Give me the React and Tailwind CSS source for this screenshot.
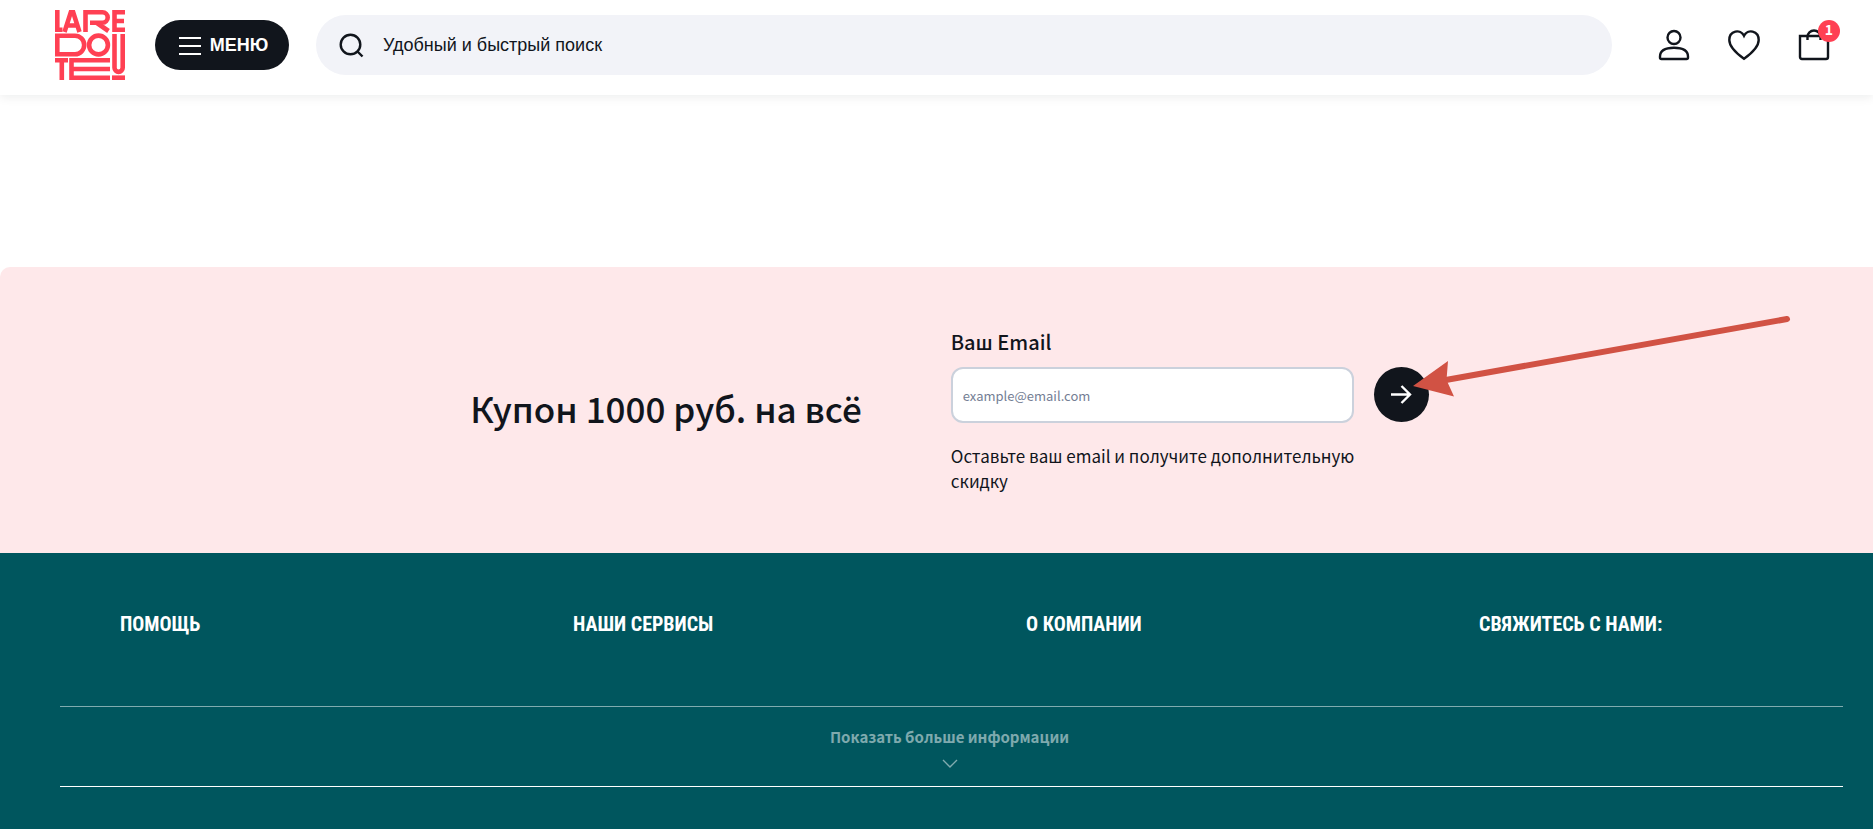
const FOOTER_COLUMNS = ['ПОМОЩЬ', 'НАШИ СЕРВИСЫ', 'О КОМПАНИИ', 'СВЯЖИТЕСЬ С НАМИ:'];

function Logo() {
  return (
    <svg className="w-[70px] h-[70px]" viewBox="0 0 70 70" fill="none" stroke="#ff4053" strokeWidth="4.600">
      {/* first row */}
      <path d="M2.300 0V19.700H7.500" />
      <path d="M9.500 22L15.800 2.300H18.200L24.500 22M12 15.500H22" />
      <path d="M30.500 22V2.300H47.500A5.200 5.200 0 0 1 47.500 12.700H35M42 13L53.500 21" />
      <path d="M70 2.300H59.500V19.700H70M59 11H69" />
      {/* second row */}
      <path d="M2.300 25.800H20A9.200 9.200 0 0 1 20 44.200H2.300Z" />
      <circle cx="43.500" cy="35" r="9.400" />
      <path d="M59.500 24V57.800A4.100 4.100 0 0 0 67.700 57.800V24" />
      {/* third row */}
      <path d="M0 50.300H13M6.800 50V70" />
      <path d="M55 50.300H16.500V67.700H55M17 59H55" />
      <path d="M57 67.700H70" />
    </svg>
  );
}

function Header() {
  return (
    <header className="flex items-center h-[95px] pl-[55px] pr-[43px] pb-[5px] bg-white shadow-[0_2px_10px_rgba(18,22,29,0.08)]">
      <a href="#" aria-label="La Redoute">
        <Logo />
      </a>
      <button className="flex items-center justify-center gap-2 ml-[30px] pl-0.5 w-[134px] h-[50px] rounded-full bg-[#11151c] text-white text-lg font-bold">
        <svg className="w-6 h-6" viewBox="0 0 24 24" stroke="currentColor" strokeWidth="2">
          <path d="M1 5H23M1 13H23M1 21H23" />
        </svg>
        МЕНЮ
      </button>
      <label className="flex flex-1 items-center ml-[27px] h-[60px] rounded-full bg-[#f2f3f8] pl-[22px]">
        <svg className="w-[26px] h-[26px]" viewBox="0 0 26 26" fill="none" stroke="#11151c" strokeWidth="2.400">
          <circle cx="12.500" cy="12.500" r="9.800" />
          <path d="M19 19L24.500 24.500" />
        </svg>
        <input
          type="text"
          aria-label="Поиск"
          placeholder="Удобный и быстрый поиск"
          className="flex-1 ml-[19px] h-full bg-transparent text-lg outline-none placeholder:text-[#11151c]"
        />
      </label>
      <nav className="flex items-center gap-[38px] ml-[46px]">
        <a href="#" aria-label="Профиль">
          <svg className="w-8 h-8" viewBox="0 0 32 32" fill="none" stroke="#11151c" strokeWidth="2.400">
            <circle cx="16" cy="8.500" r="6.500" />
            <path d="M2 27.500C2 21 8 18.700 16 18.700S30 21 30 27.500V28.500Q30 30 28.500 30H3.500Q2 30 2 28.500Z" />
          </svg>
        </a>
        <a href="#" aria-label="Избранное">
          <svg className="w-8 h-8" viewBox="0 0 32 32" fill="none" stroke="#11151c" strokeWidth="2.400">
            <path d="M16 29.800C10 25.500 1.300 18.500 1.300 11C1.300 1.500 12.500 -0.500 16 6.800C19.500 -0.500 30.700 1.500 30.700 11C30.700 18.500 22 25.500 16 29.800Z" />
          </svg>
        </a>
        <a href="#" aria-label="Корзина" className="relative">
          <svg className="w-8 h-8" viewBox="0 0 32 32" fill="none" stroke="#11151c" strokeWidth="2.400">
            <path d="M2 7H30V28Q30 30 28 30H4Q2 30 2 28Z" />
            <path d="M9.500 11V8A6.500 6.500 0 0 1 22.500 8V11" />
          </svg>
          <span className="absolute -top-[9px] -right-[10px] w-[22px] h-[22px] rounded-full bg-[#ff4053] text-white text-sm leading-[19px] font-bold text-center font-['Noto_Sans_CJK_SC',sans-serif]">
            1
          </span>
        </a>
      </nav>
    </header>
  );
}

function Subscribe() {
  return (
    <section className="flex justify-center items-start gap-[89px] pl-[60px] pr-[34px] py-[60px] rounded-tl-[10px] bg-[#fee8ea] font-['Noto_Sans_CJK_SC',sans-serif]">
      <h2 className="pt-[53px] text-[35px] leading-[56px] font-medium">Купон 1000 руб. на всё</h2>
      <form>
        <label htmlFor="email" className="block text-xl leading-[30px] font-medium">
          Ваш Email
        </label>
        <div className="flex gap-5 mt-[10px]">
          <input
            id="email"
            type="email"
            placeholder="example@email.com"
            className="w-[403px] h-14 px-[10px] rounded-xl border-2 border-[#cbd1dc] bg-white text-[13px] outline-none placeholder:text-[#747e94]"
          />
          <div className="relative">
            <button
              type="button"
              aria-label="Подписаться"
              className="flex items-center justify-center w-[55px] h-[55px] rounded-full bg-[#11151c] text-white"
            >
              <svg className="w-6 h-6" viewBox="0 0 24 24" fill="none" stroke="currentColor" strokeWidth="2.400">
                <path d="M2 11.500H21M12.500 3L21 11.500L12.500 20" />
              </svg>
            </button>
            <svg className="absolute left-[39px] -top-[52px] w-[378px] h-[85px] pointer-events-none" viewBox="0 0 378 85">
              <path d="M30 65.500L374 4" stroke="#d15244" strokeWidth="6" strokeLinecap="round" />
              <path d="M0 71L35 46L33.500 65L41 81.500Z" fill="#d15244" />
            </svg>
          </div>
        </div>
        <p className="mt-5 max-w-[410px] text-[17px] leading-[25px]">
          Оставьте ваш email и получите дополнительную скидку
        </p>
      </form>
    </section>
  );
}

function Footer() {
  return (
    <footer className="flex-1 pl-[60px] pr-[30px] pt-[57px] pb-10 bg-[#00565e] text-white">
      <div className="grid grid-cols-4 gap-x-[89px] pl-[60px] pb-[68px] font-['Roboto_Condensed','Liberation_Sans_Narrow',sans-serif]">
        {FOOTER_COLUMNS.map((title) => (
          <h3 key={title} className="text-xl leading-7 font-bold whitespace-nowrap">
            {title}
          </h3>
        ))}
      </div>
      <div className="border-t border-t-white/50 border-b border-b-white">
        <button className="flex flex-col items-center gap-[10px] mx-auto pr-1 pt-[18px] pb-[18px] text-white/50 text-[15px] leading-6 font-bold font-['Noto_Sans_CJK_SC',sans-serif]">
          Показать больше информации
          <svg className="w-4 h-[9px]" viewBox="0 0 16 9" fill="none" stroke="currentColor" strokeWidth="1.400">
            <path d="M1 1L8 8L15 1" />
          </svg>
        </button>
      </div>
    </footer>
  );
}

export default function App() {
  return (
    <div className="flex flex-col min-h-screen bg-white text-[#11151c] font-['Liberation_Sans',Arial,sans-serif]">
      <Header />
      <main className="pt-[172px]">
        <Subscribe />
      </main>
      <Footer />
    </div>
  );
}
